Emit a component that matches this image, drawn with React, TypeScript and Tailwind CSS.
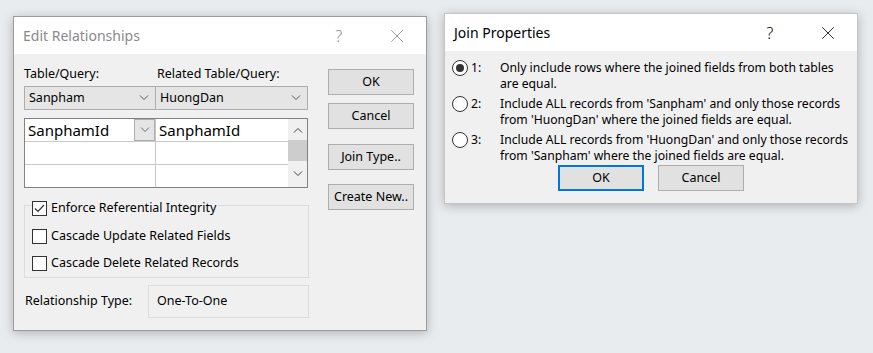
import { X } from 'lucide-react';

const font = "font-['Segoe_UI','Noto_Sans',sans-serif]";

function Chevron({ up = false, className = '' }: { up?: boolean; className?: string }) {
  return (
    <svg width="10" height="6" viewBox="0 0 10 6" className={className}>
      <path
        d={up ? 'M1 5.5 L5 1.5 L9 5.5' : 'M1 0.5 L5 4.5 L9 0.5'}
        fill="none"
        stroke="currentColor"
        strokeWidth="1"
      />
    </svg>
  );
}

function TitleBar({ title, dim }: { title: string; dim?: boolean }) {
  return (
    <div className="h-[37px] bg-white flex items-center pl-[9px]">
      <span className={`text-[14px] flex-1 ${dim ? 'text-[#8a8a8a]' : 'text-black'}`}>{title}</span>
      <span className={`w-[58px] text-center text-[16px] font-light ${dim ? 'text-[#8a8a8a]' : 'text-black'}`}>?</span>
      <span className="w-[58px] flex justify-center">
        <X size={22} strokeWidth={0.9} className={dim ? 'text-[#8a8a8a]' : 'text-black'} />
      </span>
    </div>
  );
}

function Btn({ label, focused }: { label: string; focused?: boolean }) {
  return (
    <div
      className={`h-[26px] w-[86px] bg-[#e1e1e1] flex items-center justify-center text-[12.5px] text-black ${
        focused ? 'border-2 border-[#0078d7]' : 'border border-[#adadad]'
      }`}
    >
      {label}
    </div>
  );
}

function Combo({ value, width }: { value: string; width: string }) {
  return (
    <div className={`${width} h-[24px] bg-[#e5e5e5] border border-[#adadad] flex items-center pl-[4px] pr-[6px] text-[12.5px]`}>
      <span className="flex-1">{value}</span>
      <Chevron className="text-[#555]" />
    </div>
  );
}

function Check({ label, checked }: { label: string; checked?: boolean }) {
  return (
    <div className="flex items-center gap-[4px] h-[16px]">
      <div className="w-[15px] h-[15px] bg-white border border-[#333] flex items-center justify-center">
        {checked && (
          <svg width="11" height="9" viewBox="0 0 11 9">
            <path d="M1 4.5 L4 7.5 L10 1" fill="none" stroke="#333" strokeWidth="1.2" />
          </svg>
        )}
      </div>
      <span className="text-[12.5px] text-black bg-[#f0f0f0] pr-[2px]">{label}</span>
    </div>
  );
}

function Radio({ n, lines, on }: { n: string; lines: string[]; on?: boolean }) {
  return (
    <div className="flex items-start">
      <div className="w-[16px] h-[16px] rounded-full border border-[#333] bg-white flex items-center justify-center">
        {on && <div className="w-[8px] h-[8px] rounded-full bg-[#333]" />}
      </div>
      <span className="w-[32px] pl-[3px] text-[12.2px] leading-[16px]">{n}</span>
      <div className="text-[12.2px] leading-[16px]">
        {lines.map((l) => (
          <div key={l}>{l}</div>
        ))}
      </div>
    </div>
  );
}

export default function App() {
  return (
    <div className={`relative w-[873px] h-[353px] bg-[#e9ecef] overflow-hidden text-black ${font}`}>
      {/* Edit Relationships window */}
      <div className="absolute left-[13px] top-[16px] w-[414px] h-[315px] border border-[#9b9b9b] bg-[#f0f0f0] shadow-[0_2px_10px_rgba(0,0,0,0.25)]">
        <TitleBar title="Edit Relationships" dim />
        <div className="flex pl-[10px] pt-[11px] gap-[19px]">
          <div className="w-[285px] flex flex-col">
            <div className="flex text-[12.5px] h-[18px] items-center">
              <span className="w-[133px]">Table/Query:</span>
              <span>Related Table/Query:</span>
            </div>
            <div className="flex mt-[3px]">
              <Combo value="Sanpham" width="w-[132px]" />
              <Combo value="HuongDan" width="w-[153px] -ml-px" />
            </div>
            {/* field grid */}
            <div className="mt-[8px] w-[284px] h-[70px] border border-[#828282] bg-white flex">
              <div className="flex-1 flex flex-col">
                <div className="flex h-[23px] border-b border-[#c8c8c8]">
                  <div className="w-[131px] border-r border-[#c8c8c8] flex items-center">
                    <span className="flex-1 pl-[3px] text-[15px]">SanphamId</span>
                    <div className="w-[21px] h-[22px] bg-[#e5e5e5] border border-[#adadad] flex items-center justify-center">
                      <Chevron className="text-[#666]" />
                    </div>
                  </div>
                  <span className="pl-[3px] text-[15px] flex items-center">SanphamId</span>
                </div>
                <div className="flex h-[23px] border-b border-[#c8c8c8]">
                  <div className="w-[131px] border-r border-[#c8c8c8]" />
                </div>
                <div className="flex flex-1">
                  <div className="w-[131px] border-r border-[#c8c8c8]" />
                </div>
              </div>
              <div className="w-[19px] bg-[#f0f0f0] flex flex-col items-center">
                <div className="h-[21px] flex items-center justify-center">
                  <Chevron up className="text-[#404040]" />
                </div>
                <div className="w-[19px] h-[21px] bg-[#cdcdcd]" />
                <div className="flex-1 flex items-center justify-center">
                  <Chevron className="text-[#404040]" />
                </div>
              </div>
            </div>
            {/* options group */}
            <div className="mt-[12px] relative">
              <div className="absolute left-[8px] top-0 z-10">
                <Check label="Enforce Referential Integrity" checked />
              </div>
              <div className="mt-[5px] h-[73px] border border-[#dcdcdc] pt-[22px] pl-[7px] flex flex-col gap-[11px]">
                <Check label="Cascade Update Related Fields" />
                <Check label="Cascade Delete Related Records" />
              </div>
            </div>
            <div className="flex items-center mt-[7px]">
              <span className="w-[124px] pl-[1px] text-[12.5px]">Relationship Type:</span>
              <div className="w-[161px] h-[33px] border border-[#dcdcdc] flex items-center pl-[8px] text-[12.5px]">
                One-To-One
              </div>
            </div>
          </div>
          <div className="flex flex-col pt-[4px]">
            <Btn label="OK" />
            <div className="mt-[8px]">
              <Btn label="Cancel" />
            </div>
            <div className="mt-[15px]">
              <Btn label="Join Type.." />
            </div>
            <div className="mt-[14px]">
              <Btn label="Create New.." />
            </div>
          </div>
        </div>
      </div>

      {/* Join Properties window */}
      <div className="absolute left-[444px] top-[13px] w-[414px] h-[191px] border border-[#c4c4c4] bg-[#f0f0f0] shadow-[0_2px_10px_rgba(0,0,0,0.25)]">
        <TitleBar title="Join Properties" />
        <div className="pl-[7px] pt-[9px] flex flex-col gap-[4px]">
          <Radio n="1:" on lines={['Only include rows where the joined fields from both tables', 'are equal.']} />
          <Radio
            n="2:"
            lines={["Include ALL records from 'Sanpham' and only those records", "from 'HuongDan' where the joined fields are equal."]}
          />
          <Radio
            n="3:"
            lines={["Include ALL records from 'HuongDan' and only those records", "from 'Sanpham' where the joined fields are equal."]}
          />
        </div>
        <div className="flex justify-center gap-[14px] mt-[1px]">
          <Btn label="OK" focused />
          <Btn label="Cancel" />
        </div>
      </div>
    </div>
  );
}
